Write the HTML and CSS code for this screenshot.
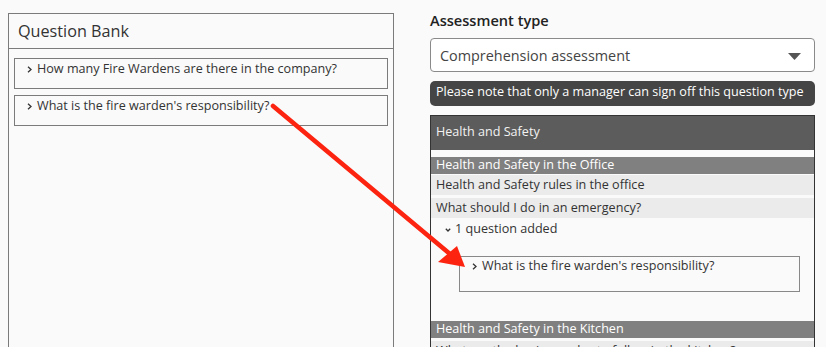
FILE: index.html
```html
<!DOCTYPE html>
<html lang="en">
<head>
  <meta charset="UTF-8">
  <meta name="viewport" content="width=device-width, initial-scale=1.0">
  <title>Assessment builder</title>
  <link rel="stylesheet" href="styles.css">
</head>
<body>
  <div class="page">
    <section class="bank">
      <h2 class="bank-title">Question Bank</h2>
      <div class="bank-list">
        <div class="question">
          <svg class="chevron" width="5" height="7" viewBox="0 0 5 7"><polyline points="1,0.8 4,3.5 1,6.2"/></svg>
          <span>How many Fire Wardens are there in the company?</span>
        </div>
        <div class="question">
          <svg class="chevron" width="5" height="7" viewBox="0 0 5 7"><polyline points="1,0.8 4,3.5 1,6.2"/></svg>
          <span>What is the fire warden's responsibility?</span>
        </div>
      </div>
    </section>

    <section class="assess">
      <label class="field-label">Assessment type</label>
      <div class="select">
        <span>Comprehension assessment</span>
        <svg class="caret" width="13" height="7" viewBox="0 0 13 7"><polygon points="0,0 13,0 6.5,7"/></svg>
      </div>
      <p class="note">Please note that only a manager can sign off this question type</p>

      <div class="tree">
        <div class="tree-head">Health and Safety</div>
        <div class="topic">Health and Safety in the Office</div>
        <div class="lesson">Health and Safety rules in the office</div>
        <div class="lesson lesson-gap">What should I do in an emergency?</div>
        <div class="added">
          <svg class="chevron-down" width="6" height="4" viewBox="0 0 6 4"><polyline points="0.8,0.8 3,3 5.2,0.8"/></svg>
          <span>1 question added</span>
        </div>
        <div class="question question-added">
          <svg class="chevron" width="5" height="7" viewBox="0 0 5 7"><polyline points="1,0.8 4,3.5 1,6.2"/></svg>
          <span>What is the fire warden's responsibility?</span>
        </div>
        <div class="topic topic-kitchen">Health and Safety in the Kitchen</div>
        <div class="lesson lesson-gap">What are the hygiene rules to follow in the kitchen?</div>
      </div>
    </section>
  </div>

  <!-- drag hint arrow drawn over both columns -->
  <svg class="drag-arrow" width="826" height="347" viewBox="0 0 826 347">
    <line x1="273" y1="106" x2="450" y2="254" stroke="#fc2410" stroke-width="4.6" stroke-linecap="round"/>
    <polygon points="465,267 438,262 457,246" fill="#fc2410"/>
  </svg>
</body>
</html>
```

FILE: styles.css
```css
body {
  margin: 0;
  background-color: #fafafa;
  color: #333;
  font-family: "Open Sans", "Liberation Sans", Arial, sans-serif;
  font-size: 12.6px;
  overflow: hidden;
}

.page {
  display: flex;
  gap: 36px;
  padding-left: 8px;
  height: 347px;
}

/* Question bank */
.bank {
  box-sizing: border-box;
  width: 386px;
  height: 400px;
  margin-top: 13px;
  border: 1px solid #7b7b7b;
}

.bank-title {
  margin: 0;
  height: 34px;
  padding-left: 9px;
  border-bottom: 1px solid #7b7b7b;
  font-size: 16.2px;
  font-weight: 400;
  line-height: 34px;
  color: #333;
}

.bank-list {
  display: flex;
  flex-direction: column;
  gap: 6px;
  padding: 9px 5px;
}

.question {
  box-sizing: border-box;
  display: flex;
  align-items: flex-start;
  height: 31px;
  padding-left: 12px;
  border: 1px solid #7b7b7b;
  line-height: 19px;
}

.chevron {
  flex: none;
  margin: 6.5px 5px 0 0;
}

.chevron polyline,
.chevron-down polyline {
  fill: none;
  stroke: #333;
  stroke-width: 1.3;
}

/* Assessment column */
.assess {
  width: 385px;
  padding-top: 10px;
}

.field-label {
  display: block;
  font-size: 14.6px;
  font-weight: 600;
  line-height: 20px;
  color: #222;
}

.select {
  box-sizing: border-box;
  display: flex;
  align-items: center;
  justify-content: space-between;
  height: 34px;
  margin-top: 8px;
  padding: 0 13px 0 9px;
  background-color: #fff;
  border: 1px solid #8a8a8a;
  border-radius: 4px;
  font-size: 14.4px;
  color: #444;
}

.caret {
  margin-top: 3px;
}

.caret polygon {
  fill: #555;
}

.note {
  margin: 9px 0 0;
  padding: 0 6px 4px;
  background-color: #454545;
  border-radius: 5px;
  line-height: 21px;
  color: #fff;
}

.tree {
  margin-top: 9px;
  height: 260px;
  border: 1px solid #333;
  border-bottom: none;
}

.tree-head {
  height: 34px;
  padding-left: 5px;
  background-color: #5c5c5c;
  line-height: 32px;
  color: #f2f2f2;
}

.topic {
  height: 17px;
  margin-top: 7px;
  padding-left: 5px;
  background-color: #808080;
  line-height: 15px;
  color: #fff;
}

.topic-kitchen {
  margin-top: 29px;
}

.lesson {
  height: 20px;
  margin-top: 1px;
  padding-left: 5px;
  background-color: #ebebeb;
  line-height: 20px;
  color: #333;
}

.lesson-gap {
  margin-top: 3px;
}

.added {
  display: flex;
  align-items: center;
  gap: 4px;
  height: 18px;
  margin-top: 2px;
  padding-left: 14px;
  line-height: 18px;
}

.chevron-down {
  margin-top: 1px;
}

.question-added {
  height: 36px;
  margin: 18px 14px 0 28px;
  border-color: #888;
  line-height: 17px;
}

.question-added .chevron {
  margin-top: 5.5px;
}

.drag-arrow {
  position: absolute;
  top: 0;
  left: 0;
  pointer-events: none;
}
```
